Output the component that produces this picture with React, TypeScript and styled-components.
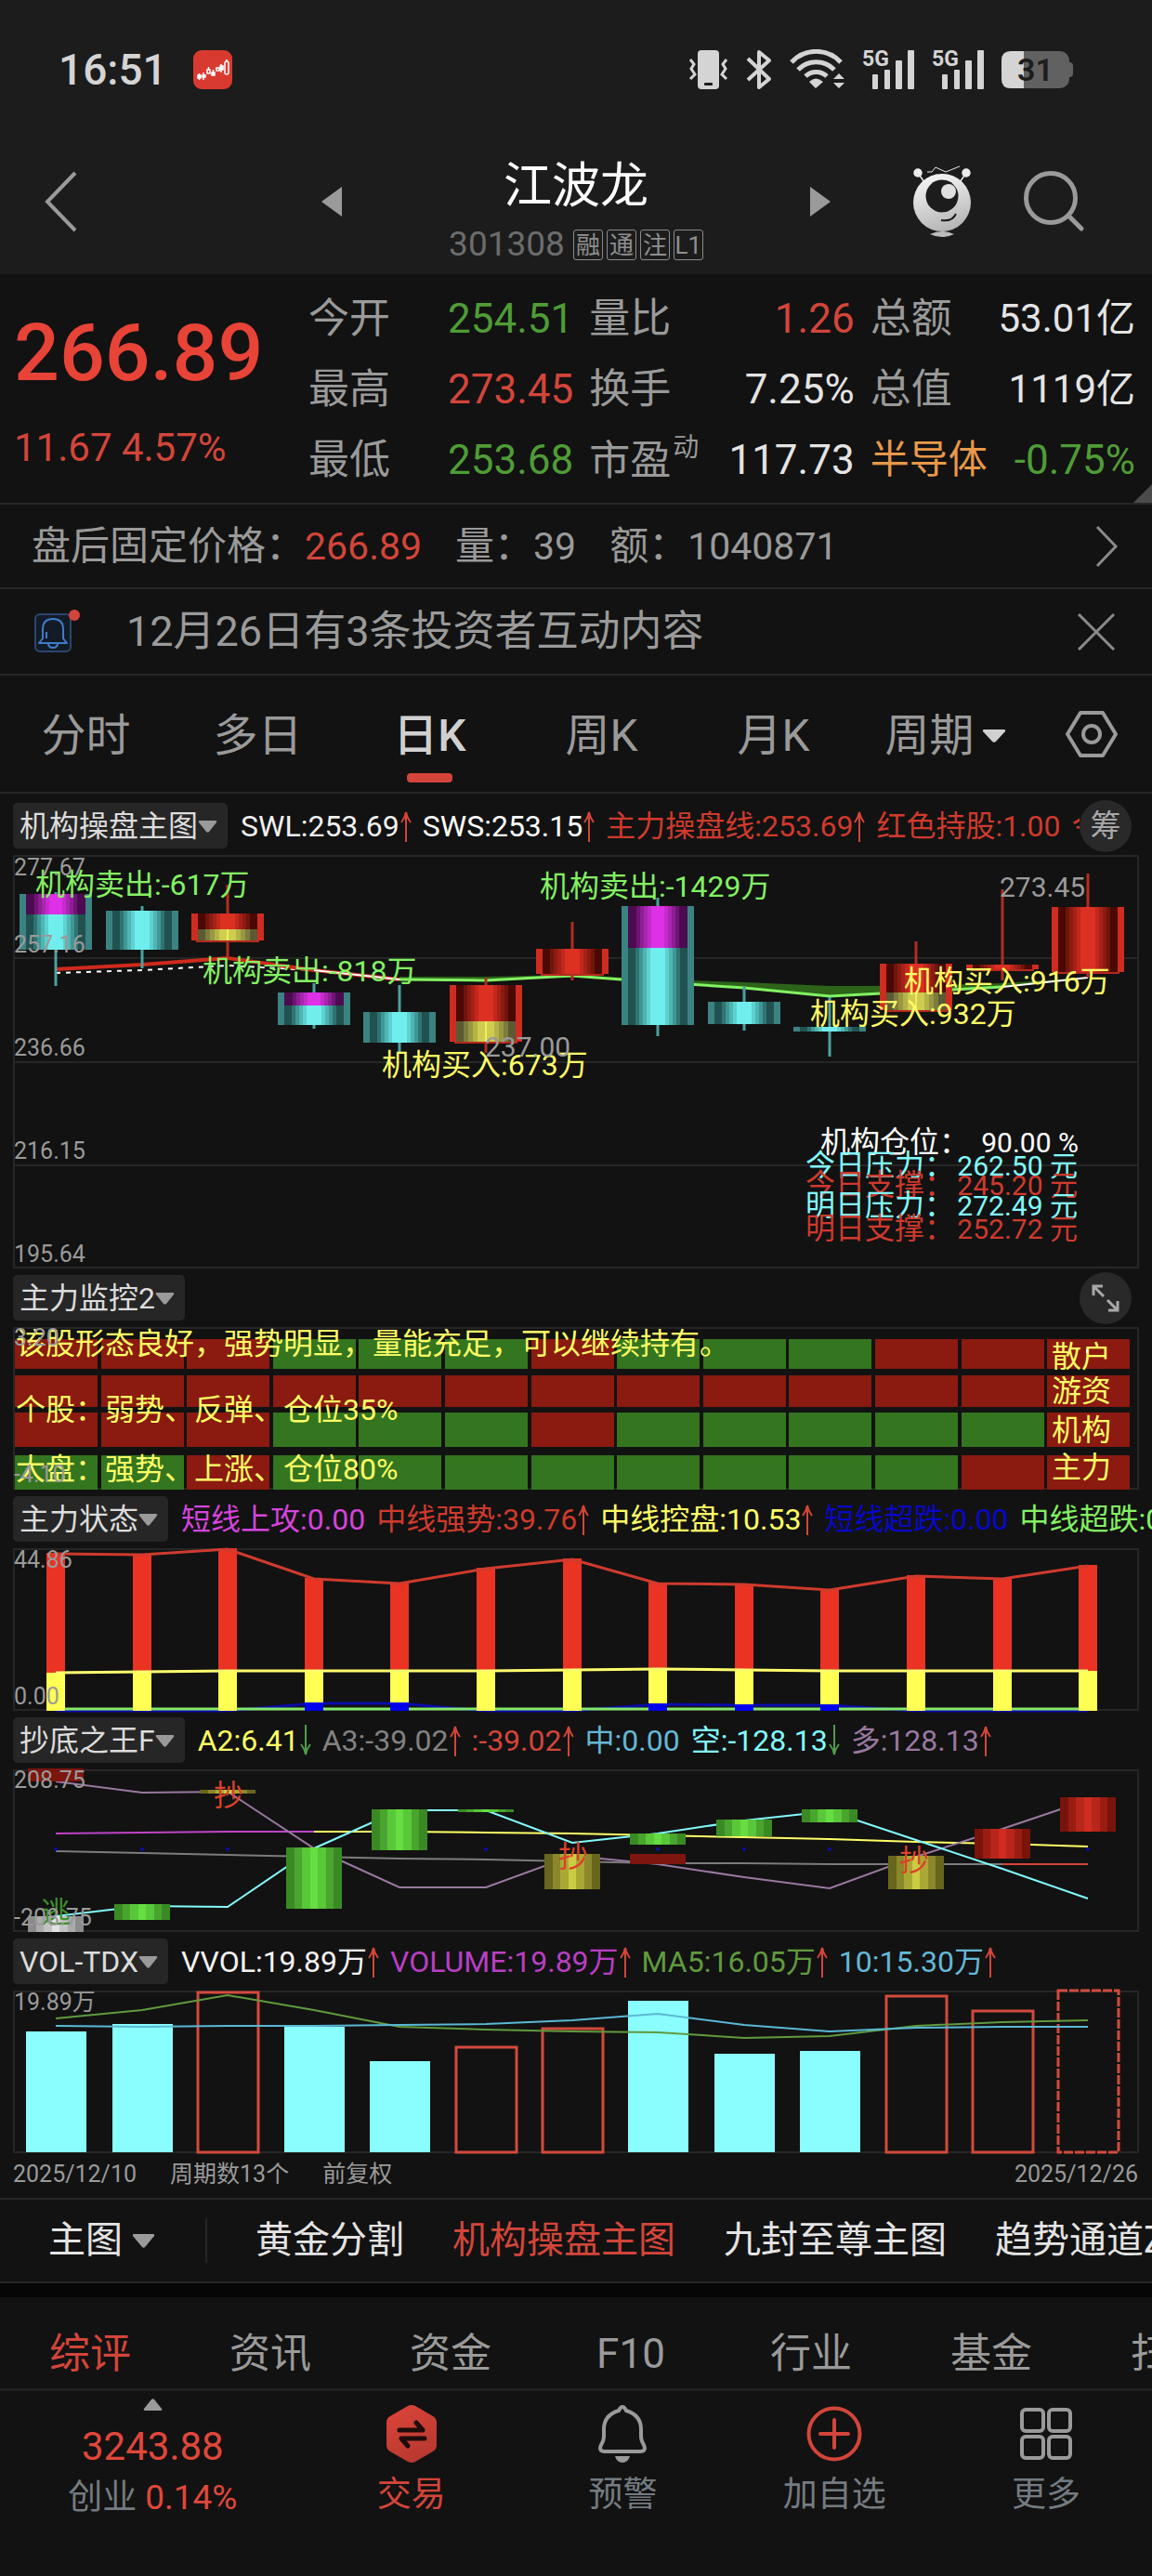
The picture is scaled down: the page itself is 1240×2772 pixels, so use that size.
import React from 'react';
import styled, { createGlobalStyle } from 'styled-components';

const C = {
  bg: '#121212',
  head: '#1c1c1c',
  line: '#262626',
  red: '#d3453a',
  green: '#4f9c36',
  gray: '#9a9a9a',
  white: '#e4e4e4',
  yellow: '#ffff66',
  cyan: '#83fbfd',
};

const Global = createGlobalStyle`
  * { box-sizing: border-box; }
  body {
    margin: 0;
    background: ${C.bg};
    color: ${C.gray};
    font-family: Roboto, "Noto Sans CJK SC", sans-serif;
  }
  button { padding: 0; border: 0; background: none; color: inherit; font: inherit; cursor: pointer; }
  a { color: inherit; text-decoration: none; }
  svg { display: block; flex: none; }
`;

const Page = styled.div`
  min-height: 100vh;
  overflow: hidden;
  background: ${C.bg};
  white-space: nowrap;
`;

/* ---------- header ---------- */

const Header = styled.header`
  background: ${C.head};
`;
const StatusBar = styled.div`
  display: flex;
  align-items: center;
  height: 149px;
  padding: 0 85px 0 63px;
  color: #d4d4d4;
`;
const Clock = styled.time`
  font-size: 46px;
  line-height: 52px;
  font-weight: 500;
  margin-right: 28px;
`;
const StatusIcons = styled.div`
  display: flex;
  align-items: center;
  gap: 19px;
  margin-left: auto;
`;
const NavBar = styled.div`
  display: grid;
  grid-template-columns: 1fr 504px 1fr;
  height: 146px;
`;
const NavLeft = styled.div`
  display: flex;
  align-items: center;
  justify-content: space-between;
  padding: 0 0 10px 48px;
`;
const NavRight = styled.div`
  display: flex;
  align-items: center;
  padding-bottom: 10px;
`;
const RobotButton = styled.button`
  margin: 0 57px 0 89px;
`;
const TitleBlock = styled.div`
  display: flex;
  flex-direction: column;
  align-items: center;
  gap: 15px;
  padding-top: 22px;
`;
const StockName = styled.h1`
  margin: 0;
  font-size: 52px;
  line-height: 60px;
  font-weight: 400;
  color: #fff;
`;
const CodeLine = styled.div`
  display: flex;
  align-items: center;
  gap: 4px;
  font-size: 37px;
  line-height: 34px;
  color: #6c6c6c;
`;
const Code = styled.span`
  margin-right: 5px;
`;
const Badge = styled.span`
  width: 32px;
  height: 33px;
  border: 1px solid #8a8a8a;
  border-radius: 3px;
  color: #8f8f8f;
  font-size: 26px;
  line-height: 32px;
  text-align: center;
`;

/* ---------- quote ---------- */

const Quote = styled.section`
  position: relative;
  display: grid;
  grid-template-columns: 300px repeat(3, 1fr);
  column-gap: 17px;
  padding: 10px 18px 8px 15px;
  border-bottom: 2px solid ${C.line};
`;
const PriceBlock = styled.div`
  display: flex;
  flex-direction: column;
  gap: 28px;
  padding-top: 25px;
  color: ${C.red};
`;
const Price = styled.strong`
  font-size: 86px;
  line-height: 100px;
  font-weight: 500;
  color: #e84337;
`;
const Change = styled.span`
  font-size: 42px;
  line-height: 48px;
`;
const Fields = styled.dl`
  margin: 0;
`;
const Field = styled.div`
  display: flex;
  align-items: center;
  justify-content: space-between;
  height: 76px;
`;
const FieldName = styled.dt<{ $color?: string }>`
  font-size: ${p => (p.$color ? 42 : 44)}px;
  line-height: 52px;
  color: ${p => p.$color || C.gray};
`;
const Dynamic = styled.sup`
  font-size: 28px;
  line-height: 28px;
  vertical-align: 20px;
  margin-left: 2px;
`;
const FieldValue = styled.dd<{ $color: string; $small?: boolean }>`
  margin: 0;
  font-size: ${p => (p.$small ? 42 : 44)}px;
  line-height: 52px;
  color: ${p => p.$color};
`;
const Corner = styled.svg`
  position: absolute;
  right: 0;
  bottom: 0;
`;

/* ---------- info rows ---------- */

const AfterHours = styled.a`
  display: flex;
  align-items: center;
  height: 91px;
  padding: 0 36px 0 34px;
  border-bottom: 2px solid ${C.line};
  font-size: 42px;
  line-height: 50px;
`;
const Amount = styled.span<{ $red?: boolean }>`
  margin-right: 36px;
  font-size: 41px;
  color: ${p => (p.$red ? C.red : C.gray)};
`;
const Push = styled.span`
  margin-left: auto;
`;
const Notice = styled.div`
  display: flex;
  align-items: center;
  height: 93px;
  padding: 0 40px 0 36px;
  border-bottom: 2px solid ${C.line};
  font-size: 45px;
  line-height: 54px;
`;
const NoticeText = styled.a`
  margin-left: 48px;
`;
const CloseButton = styled.button`
  margin-left: auto;
`;

/* ---------- period tabs ---------- */

const Periods = styled.nav`
  display: flex;
  height: 127px;
  border-bottom: 2px solid ${C.line};
`;
const Period = styled.button<{ $on?: boolean }>`
  flex: 185;
  display: flex;
  flex-direction: column;
  align-items: center;
  padding-top: 36px;
  font-size: 48px;
  line-height: 58px;
  font-weight: ${p => (p.$on ? 500 : 400)};
  color: ${p => (p.$on ? '#d0d0d0' : C.gray)};

  &::after {
    content: '';
    width: 49px;
    height: 10px;
    margin-top: 11px;
    border-radius: 4px;
    background: ${p => (p.$on ? C.red : 'transparent')};
  }
`;
const PeriodMore = styled.span`
  display: flex;
  align-items: center;
  gap: 8px;
`;
const SettingsButton = styled.button`
  flex: 130;
  display: grid;
  place-items: center;
`;

/* ---------- chart panes ---------- */

const Panes = styled.main`
  padding: 10px 0 0 14px;
`;
const Pane = styled.section`
  margin-bottom: 7px;
`;
const PaneHead = styled.div`
  display: flex;
  align-items: center;
  height: 49px;
  margin-bottom: 7px;
  font-size: 32px;
  line-height: 40px;
`;
const Picker = styled.button`
  display: flex;
  align-items: center;
  flex: none;
  height: 49px;
  padding: 1px 11px 0 7px;
  border-radius: 5px;
  background: #262626;
  color: #dcdcdc;
`;
const Readouts = styled.div`
  flex: 1;
  display: flex;
  gap: 12px;
  min-width: 0;
  margin-left: 14px;
  padding-top: 1px;
  overflow: hidden;
`;
const Readout = styled.span<{ $color: string }>`
  display: flex;
  align-items: center;
  flex: none;
  color: ${p => p.$color};
`;
const RoundButton = styled.button`
  display: grid;
  place-items: center;
  flex: none;
  width: 56px;
  height: 56px;
  margin: 0 22px 0 0;
  border-radius: 50%;
  background: #292929;
  color: #a8a8a8;
  font-size: 33px;
  line-height: 40px;
`;
const Plot = styled.svg`
  width: calc(100% - 14px);
  height: auto;
  overflow: visible;
`;
const PlotText = styled.text`
  font-family: Roboto, "Noto Sans CJK SC", sans-serif;
  white-space: pre;
`;
const DateRow = styled.footer`
  display: flex;
  gap: 36px;
  padding: 1px 15px 10px 14px;
  border-bottom: 2px solid ${C.line};
  font-size: 25px;
  line-height: 30px;
`;

/* ---------- indicator strip ---------- */

const Strip = styled.nav`
  display: flex;
  align-items: center;
  gap: 52px;
  height: 90px;
  padding-left: 52px;
  border-bottom: 2px solid ${C.line};
  font-size: 40px;
  line-height: 48px;
`;
const StripMenu = styled.button`
  display: flex;
  align-items: center;
  gap: 10px;
  flex: none;
  height: 48px;
  padding-right: 54px;
  border-right: 2px solid ${C.line};
  color: ${C.white};
`;
const StripItem = styled.button<{ $on?: boolean }>`
  flex: none;
  color: ${p => (p.$on ? C.red : C.white)};
`;
const Band = styled.div`
  height: 15px;
  background: #060606;
`;
const Sections = styled.nav`
  display: flex;
  height: 101px;
  padding-top: 24px;
  border-bottom: 3px solid #202020;
`;
const SectionTab = styled.button<{ $on?: boolean }>`
  flex: 0 0 194px;
  height: 74px;
  font-size: 44px;
  line-height: 74px;
  color: ${p => (p.$on ? C.red : C.gray)};
`;

/* ---------- bottom bar ---------- */

const BottomBar = styled.nav`
  display: grid;
  grid-template-columns: 329fr repeat(4, 228fr);
  align-items: start;
  padding-bottom: 58px;
`;
const IndexButton = styled.button`
  display: flex;
  flex-direction: column;
  align-items: center;
  padding-top: 8px;
`;
const IndexValue = styled.span`
  margin: 14px 0 8px;
  font-size: 42px;
  line-height: 50px;
  color: #e0473b;
`;
const IndexLine = styled.span`
  display: flex;
  gap: 9px;
  font-size: 37px;
  line-height: 44px;
  color: #737b80;
`;
const IndexChange = styled.span`
  color: #e0473b;
`;
const Action = styled.button<{ $on?: boolean }>`
  display: flex;
  flex-direction: column;
  align-items: center;
  gap: 14px;
  padding-top: 15px;
  font-size: 37px;
  line-height: 42px;
  color: ${p => (p.$on ? C.red : '#737b80')};
`;

/* ---------- small drawings ---------- */

const Caret = ({ w = 21, h = 13, color = '#9a9a9a', up = false }) => (
  <svg width={w} height={h} viewBox="0 0 21 13" preserveAspectRatio="none">
    <path
      d={up ? 'M2 13Q0 13 1 11L9 1Q10.500 -.5 12 1L20 11Q21 13 19 13Z' : 'M2 0Q0 0 1 2L9 12Q10.500 13.500 12 12L20 2Q21 0 19 0Z'}
      fill={color}
    />
  </svg>
);

const Arrow = ({ dir }: { dir: 'up' | 'down' }) => (
  <svg width="13" height="34" viewBox="0 0 13 34" fill="none" stroke={dir === 'up' ? C.red : '#4c9e4a'} strokeWidth="2">
    <path d={dir === 'up' ? 'M7 34V2M2 13Q6 8 7 2Q8 8 12 13' : 'M7 0V32M2 21Q6 26 7 32Q8 26 12 21'} />
  </svg>
);

const AppIcon = () => (
  <svg width="42" height="42" viewBox="0 0 42 42">
    <rect width="42" height="42" rx="9" fill="#d93a30" />
    <g stroke="#fff" fill="#fff" strokeWidth="1.500">
      <rect x="5" y="27" width="3" height="3" />
      <path d="M6.500 25V32M11 24V32M30 15V24" />
      <rect x="10" y="27" width="3" height="2" fill="none" />
      <rect x="15" y="21" width="3" height="4" fill="none" />
      <path d="M16.500 18V21" />
      <rect x="20" y="24" width="3" height="3" />
      <path d="M21.500 21V28" />
      <rect x="25" y="19" width="3" height="3" fill="none" />
      <rect x="29" y="17" width="3" height="4" />
      <rect x="34" y="12" width="4" height="14" rx="2" fill="none" />
      <path d="M36 10V12" />
    </g>
  </svg>
);

const Vibrate = () => (
  <svg width="43" height="44" viewBox="0 0 43 44">
    <rect x="10" y="1" width="23" height="42" rx="4" fill="#d4d4d4" />
    <rect x="17" y="36" width="9" height="3" rx="1" fill={C.head} />
    <path d="M2 11L6 16L3 21L7 27L2 32M41 11L37 16L40 21L36 27L41 32" fill="none" stroke="#d4d4d4" strokeWidth="3" />
  </svg>
);

const Bluetooth = () => (
  <svg width="28" height="44" viewBox="0 0 28 44">
    <path d="M2 10L25 32L14 41V3L25 12L2 33" fill="none" stroke="#d4d4d4" strokeWidth="4" strokeLinejoin="round" />
  </svg>
);

const Wifi = () => (
  <svg width="59" height="44" viewBox="0 0 59 44">
    <g fill="none" stroke="#d4d4d4" strokeWidth="5">
      <path d="M2 14A36 36 0 0 1 55 14M9 22A27 27 0 0 1 48 22M17 29A17 17 0 0 1 40 29" />
    </g>
    <path d="M21 35Q28 28 36 35L28 42ZM53 26L59 32H47ZM47 36H59L53 42Z" fill="#d4d4d4" />
  </svg>
);

const SignalSvg = styled.svg`
  overflow: visible;
`;

const Signal = () => (
  <SignalSvg width="56" height="44" viewBox="0 0 56 44" fill="#d4d4d4">
    <PlotText x="0" y="18" fontSize="23" fontWeight="700">5G</PlotText>
    <rect x="11" y="27" width="6" height="16" rx="1" />
    <rect x="24" y="22" width="6" height="21" rx="1" />
    <rect x="36" y="12" width="7" height="31" rx="1" />
    <rect x="49" y="1" width="7" height="42" rx="1" />
  </SignalSvg>
);

const Battery = () => (
  <svg width="77" height="40" viewBox="0 0 77 40">
    <rect width="73" height="40" rx="10" fill="#616161" />
    <path d="M73 12Q77 12 77 16V24Q77 28 73 28Z" fill="#616161" />
    <path d="M24 0H10Q0 0 0 10V30Q0 40 10 40H24Z" fill="#d4d4d4" />
    <PlotText x="17" y="32" fontSize="34" fontWeight="600" fill={C.head}>31</PlotText>
  </svg>
);

const Robot = () => (
  <svg width="62" height="78" viewBox="0 0 62 78">
    <defs>
      <linearGradient id="shell" x1="0.3" y1="0" x2="0.6" y2="1">
        <stop offset="0" stopColor="#f6f6f6" />
        <stop offset="1" stopColor="#b4b4b4" />
      </linearGradient>
    </defs>
    <circle cx="31" cy="40" r="31" fill="url(#shell)" />
    <circle cx="31" cy="33" r="17.500" fill={C.head} />
    <circle cx="38" cy="28" r="8" fill="#e0e0e0" />
    <path d="M30 59Q42 61 46 52" fill="none" stroke={C.head} strokeWidth="2" />
    <g fill="#ececec" stroke="#ececec" strokeWidth="1.500">
      <circle cx="5" cy="8" r="4" />
      <circle cx="57" cy="8" r="4" />
      <path d="M7 11L12 18M55 11L50 18" />
      <path d="M15 7H20L24 2L35 7L50 1" fill="none" strokeWidth="1" />
    </g>
    <path d="M18 74Q31 68 44 74Q31 80 18 74Z" fill="#bdbdbd" />
  </svg>
);

const Search = () => (
  <svg width="66" height="66" viewBox="0 0 66 66" fill="none" stroke="#9a9a9a">
    <circle cx="29" cy="29" r="26.500" strokeWidth="5" />
    <path d="M49 49L62 62" strokeWidth="5" strokeLinecap="round" />
  </svg>
);

const NoticeBell = () => (
  <svg width="52" height="48" viewBox="0 0 52 48" fill="none">
    <rect x="2" y="5" width="38" height="40" rx="5" stroke="#2b4670" strokeWidth="2" fill="#131b27" />
    <g stroke="#3f7cc8" strokeWidth="2">
      <path d="M10 31V21Q10 10 21 10Q32 10 32 21V31L36 36H6Z" strokeLinejoin="round" />
      <path d="M16 36Q16 41 21 41Q26 41 26 36M14 31V24" />
    </g>
    <circle cx="44" cy="6" r="6" fill={C.red} />
  </svg>
);

const Hexagon = () => (
  <svg width="56" height="50" viewBox="0 0 56 50" fill="none" stroke="#9a9a9a" strokeWidth="4" strokeLinejoin="round">
    <path d="M16 2H40L54 25L40 48H16L2 25Z" />
    <circle cx="28" cy="25" r="9" />
  </svg>
);

const TradeIcon = () => (
  <svg width="54" height="62" viewBox="0 0 54 62">
    <defs>
      <linearGradient id="trade" x1="0" y1="0" x2="0.5" y2="1">
        <stop offset="0" stopColor="#df453a" />
        <stop offset="1" stopColor="#b83930" />
      </linearGradient>
    </defs>
    <path d="M23 1Q27 -1 31 1L50 12Q54 14 54 19V43Q54 48 50 50L31 61Q27 63 23 61L4 50Q0 48 0 43V19Q0 14 4 12Z" fill="url(#trade)" />
    <path d="M14 27H39L32 19M41 36H16L23 44" fill="none" stroke="#1d0c0b" strokeWidth="5" strokeLinecap="round" strokeLinejoin="round" />
  </svg>
);

const AlertIcon = () => (
  <svg width="52" height="62" viewBox="0 0 52 62">
    <path
      d="M26 2Q28 2 30 6Q46 11 46 26V34Q46 38 49 43Q52 50 45 50H7Q0 50 3 43Q6 38 6 34V26Q6 11 22 6Q24 2 26 2Z"
      fill="none"
      stroke="#9a9a9a"
      strokeWidth="4"
    />
    <path d="M18 55H34Q32 62 26 62Q20 62 18 55Z" fill="#9a9a9a" />
  </svg>
);

const AddIcon = () => (
  <svg width="60" height="62" viewBox="0 0 60 62" fill="none" stroke={C.red} strokeWidth="4">
    <circle cx="30" cy="31" r="27.500" />
    <path d="M15 31H45M30 16V46" strokeLinecap="round" />
  </svg>
);

const MoreIcon = () => (
  <svg width="56" height="62" viewBox="0 0 56 62" fill="none" stroke="#9a9a9a" strokeWidth="4">
    {[2, 31].map(x => [5, 34].map(y => <rect key={`${x}-${y}`} x={x} y={y} width="23" height="23" rx="4" />))}
  </svg>
);

/* ---------- chart helpers ---------- */

const SLOT = 92.6;
const cx = (i: number) => Math.round(46 + i * SLOT);
const polyline = (ys: number[], from = 0) => ys.map((y, k) => `${cx(from + k)},${y}`).join(' ');

type Tone = [number, string][];

const TONES: Record<string, Tone> = {
  cyan: [[32, '#215250'], [24, '#2f7472'], [20, '#3f9795'], [16, '#4fb5b3'], [12, '#5dd2d0'], [8, '#70eeee']],
  purple: [[32, '#4c0b50'], [23, '#6f1575'], [19, '#8f1d96'], [15, '#a926b0'], [11, '#c42bcb'], [7, '#de30e6']],
  red: [[32, '#4a0903'], [24, '#70140c'], [20, '#8c1b12'], [16, '#a62118'], [12, '#c2281c'], [8, '#dc3022']],
  yellow: [[32, '#5b5a33'], [24, '#7d7c3c'], [19, '#999841'], [14, '#b4b348'], [9, '#cfcc50'], [1, '#f2ef58']],
};

const Stripes = ({ x, top, bottom, tone }: { x: number; top: number; bottom: number; tone: Tone }) => (
  <g>
    {tone.map(([half, fill]) => (
      <rect key={half} x={x - half} y={top} width={half * 2} height={bottom - top} fill={fill} />
    ))}
  </g>
);

const Frame = ({ h, grid = [] }: { h: number; grid?: number[] }) => (
  <g stroke={C.line} strokeWidth="2" fill="none">
    <rect x="1" y="1" width="1210" height={h - 2} />
    {grid.map(y => <path key={y} d={`M1 ${y}H1211`} />)}
  </g>
);

const Label = ({ x, y, children, size = 32, color = C.gray, end = false }: {
  x: number; y: number; children: string; size?: number; color?: string; end?: boolean;
}) => (
  <PlotText x={x} y={y} fontSize={size} fill={color} textAnchor={end ? 'end' : 'start'}>{children}</PlotText>
);

/* ---------- main chart ---------- */

type Candle = { kind: 'cyan' | 'red'; high: number; top: number; bottom: number; low: number; split?: number };

const candles: Candle[] = [
  { kind: 'cyan', high: 40, top: 42, bottom: 102, low: 141, split: 64 },
  { kind: 'cyan', high: 55, top: 60, bottom: 102, low: 122 },
  { kind: 'red', high: 32, top: 63, bottom: 92, low: 112, split: 80 },
  { kind: 'cyan', high: 138, top: 148, bottom: 183, low: 187, split: 162 },
  { kind: 'cyan', high: 140, top: 169, bottom: 202, low: 212 },
  { kind: 'red', high: 132, top: 140, bottom: 201, low: 213, split: 179 },
  { kind: 'red', high: 72, top: 101, bottom: 128, low: 135 },
  { kind: 'cyan', high: 46, top: 55, bottom: 183, low: 195, split: 100 },
  { kind: 'cyan', high: 142, top: 158, bottom: 182, low: 189 },
  { kind: 'cyan', high: 153, top: 185, bottom: 190, low: 217 },
  { kind: 'red', high: 93, top: 117, bottom: 167, low: 167, split: 148 },
  { kind: 'red', high: 37, top: 118, bottom: 123, low: 135 },
  { kind: 'red', high: 20, top: 56, bottom: 126, low: 132 },
];

const MainChart = () => (
  <Plot viewBox="0 0 1212 445" role="img" aria-label="机构操盘主图">
    <Frame h={445} grid={[111, 223, 334]} />
    <polyline points={`${polyline([131, 131, 129, 134, 137, 141, 141, 138, 132], 4)} ${cx(12)},132 ${cx(11)},142 ${cx(10)},147 ${cx(9)},152 ${cx(8)},143 ${cx(7)},137 ${cx(6)},130 ${cx(5)},135 ${cx(4)},134`} fill="#2c6419" />
    <polyline points={polyline([127, 124, 119, 124])} fill="none" stroke="#fff" strokeWidth="2" strokeDasharray="5 6" />
    <polyline points={polyline([123, 118, 111, 124, 134])} fill="none" stroke="#cf2a1d" strokeWidth="4" />
    <polyline points={polyline([124, 134], 3)} fill="none" stroke="#fff" strokeWidth="2" />
    <polyline points={polyline([134, 135, 130, 137, 143, 152, 147, 142], 4)} fill="none" stroke="#83f163" strokeWidth="3" />
    <polyline points={polyline([142, 132], 11)} fill="none" stroke="#fff" strokeWidth="2" />
    {candles.map((c, i) => {
      const x = cx(i);
      const cyan = c.kind === 'cyan';
      return (
        <g key={i}>
          <rect x={x - 39} y={c.top} width="78" height={c.bottom - c.top} fill={cyan ? '#3b8382' : '#cf2c20'} />
          <Stripes x={x} top={c.top} bottom={c.bottom} tone={TONES[c.kind]} />
          {c.split && cyan && <Stripes x={x} top={c.top} bottom={c.split} tone={TONES.purple} />}
          {c.split && !cyan && <Stripes x={x} top={c.split} bottom={c.bottom} tone={TONES.yellow} />}
          {!cyan && <path d={`M${x - 34} ${c.bottom + 1}H${x + 34}`} stroke="#b5281d" strokeWidth="2" />}
          <path d={`M${x} ${c.high}V${c.top}M${x} ${c.bottom}V${c.low}`} stroke={cyan ? '#4ba19f' : '#b02d22'} strokeWidth="3" />
        </g>
      );
    })}
    <Label x={24} y={43} color="#83f163">机构卖出:-617万</Label>
    <Label x={567} y={45} color="#83f163">机构卖出:-1429万</Label>
    <Label x={204} y={136} color="#83f163">机构卖出:-818万</Label>
    <Label x={397} y={237} color={C.yellow}>机构买入:673万</Label>
    <Label x={959} y={147} color={C.yellow}>机构买入:916万</Label>
    <Label x={858} y={182} color={C.yellow}>机构买入:932万</Label>
    {[['277.67', 22], ['257.16', 105], ['236.66', 216], ['216.15', 327], ['195.64', 438]].map(([t, y]) => (
      <Label key={t} x={1} y={y as number} size={25}>{t as string}</Label>
    ))}
    <Label x={1062} y={45} size={30}>273.45</Label>
    <Label x={508} y={217} size={30}>237.00</Label>
    <Label x={869} y={320} color="#fff">机构仓位：</Label>
    <Label x={1147} y={320} size={30} color="#fff" end>90.00 %</Label>
    {[
      ['今日压力：', '262.50 元', 345, C.cyan],
      ['今日支撑：', '245.20 元', 366, '#cf3a2d'],
      ['明日压力：', '272.49 元', 388, C.cyan],
      ['明日支撑：', '252.72 元', 413, '#cf3a2d'],
    ].map(([name, value, y, color]) => (
      <g key={name as string}>
        <Label x={853} y={y as number} color={color as string}>{name as string}</Label>
        <Label x={1146} y={y as number} size={30} color={color as string} end>{value as string}</Label>
      </g>
    ))}
  </Plot>
);

/* ---------- monitor grid ---------- */

const heat: [number, number, string][] = [
  [13, 32, 'RRRGGGRGGGRRR'],
  [52, 34, 'RRRRRRRRRRRRR'],
  [92, 37, 'RRRGGGRGGGGGR'],
  [138, 37, 'GGRGGGGGGGGRR'],
];

const MonitorChart = () => (
  <Plot viewBox="0 0 1212 175" role="img" aria-label="主力监控2">
    <Frame h={175} />
    {heat.map(([y, h, cells]) =>
      cells.split('').map((c, i) => (
        <rect key={`${y}-${i}`} x={cx(i) - 44} y={y} width="89" height={h} fill={c === 'R' ? '#8b1a10' : '#34751f'} />
      )),
    )}
    <Label x={3} y={29} color={C.yellow}>该股形态良好，强势明显，量能充足，可以继续持有。</Label>
    <Label x={3} y={100} color={C.yellow}>个股：弱势、反弹、仓位35%</Label>
    <Label x={3} y={164} color={C.yellow}>大盘：强势、上涨、仓位80%</Label>
    <Label x={1} y={20} size={25}>3.20</Label>
    <Label x={1} y={167} size={25}>-4.10</Label>
    <Label x={1118} y={43} color={C.yellow}>散户</Label>
    <Label x={1118} y={80} color={C.yellow}>游资</Label>
    <Label x={1118} y={122} color={C.yellow}>机构</Label>
    <Label x={1118} y={162} color={C.yellow}>主力</Label>
    <rect x="1155" y="24" width="2" height="4" fill="#fff" />
  </Plot>
);

/* ---------- state bars ---------- */

const redTops = [5, 6, 0, 32, 37, 21, 11, 37, 38, 44, 29, 32, 18];
const yellowTops = [134, 133, 132, 132, 132, 132, 131, 130, 131, 132, 132, 132, 132];
const blueTops: Record<number, number> = { 3: 166, 4: 166, 7: 167, 8: 168, 9: 168 };

const StateChart = () => (
  <Plot viewBox="0 0 1212 175" role="img" aria-label="主力状态">
    <Frame h={175} />
    <polyline points={polyline([175, 175, 175, 167, 167, 175, 175, 168, 169, 169, 175, 175, 175])} fill="none" stroke="#0b0ba8" strokeWidth="3" />
    <path d={`M${cx(0)} 173H${cx(12)}`} stroke="#83e96a" strokeWidth="3" />
    {redTops.map((t, i) => (
      <g key={i}>
        <rect x={cx(i) - 10} y={t} width="20" height={175 - t} fill="#ea3323" />
        <rect x={cx(i) - 10} y={yellowTops[i]} width="20" height={175 - yellowTops[i]} fill="#ffff54" />
        {blueTops[i] && <rect x={cx(i) - 10} y={blueTops[i]} width="20" height={175 - blueTops[i]} fill="#0000f0" />}
      </g>
    ))}
    <polyline points={polyline(redTops.map(t => t + 1))} fill="none" stroke="#cf3b2e" strokeWidth="3" />
    <polyline points={polyline(yellowTops)} fill="none" stroke="#ffff6e" strokeWidth="3" />
    <Label x={1} y={21} size={25}>44.86</Label>
    <Label x={1} y={168} size={25}>0.00</Label>
  </Plot>
);

/* ---------- bottom-fishing chart ---------- */

const BOX: Record<string, Tone> = {
  green: [[30, '#3a8a24'], [21, '#49a52e'], [13, '#58c838'], [4, '#66de42']],
  yellow: [[30, '#68661c'], [21, '#8a882a'], [13, '#aaa834'], [4, '#cccc44']],
  red: [[30, '#78140c'], [21, '#9a1d13'], [13, '#b8251a'], [4, '#d02c1f']],
  dark: [[30, '#7d160e']],
  gray: [[30, '#8c8c8c'], [21, '#ababab'], [13, '#c4c4c4'], [4, '#e2e2e2']],
};

const boxes: [number, string, number, number][] = [
  [0, 'dark', -1, 13], [0, 'gray', 158, 175], [1, 'green', 145, 162], [2, 'yellow', 22, 26],
  [3, 'green', 84, 150], [4, 'green', 43, 87], [5, 'green', 43, 46], [6, 'yellow', 91, 129],
  [7, 'green', 69, 81], [7, 'dark', 91, 102], [8, 'green', 54, 72], [9, 'green', 43, 57],
  [10, 'yellow', 93, 129], [11, 'red', 64, 96], [12, 'red', 30, 67],
];

const DipChart = () => (
  <Plot viewBox="0 0 1212 175" role="img" aria-label="抄底之王F">
    <Frame h={175} />
    <g fill="none" strokeWidth="2">
      <polyline points={polyline([88, 90, 92, 94, 96, 97, 99, 101, 101, 102, 102, 102])} stroke="#7c7c7c" />
      <polyline points={polyline([102, 102], 11)} stroke={C.red} />
      <polyline points={polyline([69, 68, 67, 67])} stroke="#c044c8" />
      <polyline points={polyline([67, 67, 68, 69, 71, 73, 75, 78, 80, 83], 3)} stroke={C.yellow} />
      <polyline points={polyline([13, 25, 24, 85, 127, 127, 93, 102, 116, 128, 94, 64, 33])} stroke="#99789f" />
      <polyline points={polyline([158, 147, 148, 85, 44, 44, 79, 69, 55, 45, 76, 107, 139])} stroke={C.cyan} />
    </g>
    {[0, 1, 2, 5, 7, 8, 9, 12].map(i => <circle key={i} cx={cx(i)} cy="86" r="2" fill="#0d0da8" />)}
    {boxes.map(([i, tone, top, bottom]) => (
      <Stripes key={`${i}${tone}`} x={cx(i)} top={top} bottom={bottom} tone={BOX[tone]} />
    ))}
    <Label x={216} y={39} color="#db4129">抄</Label>
    <Label x={587} y={105} color="#db4129">抄</Label>
    <Label x={954} y={109} color="#db4129">抄</Label>
    <Label x={30} y={165} color="#3f8f2d">逃</Label>
    <Label x={1} y={20} size={25}>208.75</Label>
    <Label x={1} y={168} size={25}>-208.75</Label>
  </Plot>
);

/* ---------- volume ---------- */

const volumes: [number, boolean][] = [
  [44, false], [36, false], [2, true], [39, false], [76, false], [61, true], [41, true],
  [11, false], [68, false], [65, false], [6, true], [22, true], [0, true],
];

const VolumeChart = () => (
  <Plot viewBox="0 0 1212 175" role="img" aria-label="VOL-TDX">
    <Frame h={175} />
    {volumes.map(([top, rise], i) =>
      rise ? (
        <rect
          key={i}
          x={cx(i) - 32}
          y={top}
          width="65"
          height={174 - top}
          fill="none"
          stroke="#d24a3c"
          strokeWidth="3"
          strokeDasharray={i === 12 ? '10 2' : undefined}
        />
      ) : (
        <rect key={i} x={cx(i) - 32} y={top} width="65" height={174 - top} fill="#8afeff" />
      ),
    )}
    <polyline points={polyline([30, 21, 5, 21, 39, 42, 44, 45, 51, 49, 38, 34, 32])} fill="none" stroke="#609a3e" strokeWidth="2" />
    <polyline points={polyline([38, 39, 38, 38, 37, 36, 32, 25, 37, 44, 40, 39, 39])} fill="none" stroke="#5ab8d4" strokeWidth="2" />
    <Label x={1} y={21} size={25}>19.89万</Label>
  </Plot>
);

/* ---------- pane ---------- */

type Reading = [string, string, ('up' | 'down')?];

const ChartPane = ({ name, readings, action, children }: {
  name: string; readings: Reading[]; action?: React.ReactNode; children: React.ReactNode;
}) => (
  <Pane>
    <PaneHead>
      <Picker type="button">{name}<Caret /></Picker>
      <Readouts>
        {readings.map(([text, color, dir]) => (
          <Readout key={text} $color={color}>{text}{dir && <Arrow dir={dir} />}</Readout>
        ))}
      </Readouts>
      {action}
    </PaneHead>
    {children}
  </Pane>
);

const quoteColumns: { name: string; value: string; color: string; accent?: string; sup?: string; small?: boolean }[][] = [
  [
    { name: '今开', value: '254.51', color: C.green },
    { name: '最高', value: '273.45', color: C.red },
    { name: '最低', value: '253.68', color: C.green },
  ],
  [
    { name: '量比', value: '1.26', color: C.red },
    { name: '换手', value: '7.25%', color: C.white },
    { name: '市盈', sup: '动', value: '117.73', color: C.white },
  ],
  [
    { name: '总额', value: '53.01亿', color: C.white, small: true },
    { name: '总值', value: '1119亿', color: C.white, small: true },
    { name: '半导体', value: '-0.75%', color: C.green, accent: '#e8984a' },
  ],
];

export default function App() {
  return (
    <Page>
      <Global />
      <Header>
        <StatusBar>
          <Clock>16:51</Clock>
          <AppIcon />
          <StatusIcons>
            <Vibrate />
            <Bluetooth />
            <Wifi />
            <Signal />
            <Signal />
            <Battery />
          </StatusIcons>
        </StatusBar>
        <NavBar>
          <NavLeft>
            <button type="button" aria-label="返回">
              <svg width="36" height="66" viewBox="0 0 36 66" fill="none" stroke="#9a9a9a" strokeWidth="4">
                <path d="M33 2L3 33L33 64" />
              </svg>
            </button>
            <button type="button" aria-label="上一只">
              <svg width="22" height="32" viewBox="0 0 22 32"><path d="M22 0V32L0 16Z" fill="#9a9a9a" /></svg>
            </button>
          </NavLeft>
          <TitleBlock>
            <StockName>江波龙</StockName>
            <CodeLine>
              <Code>301308</Code>
              <Badge>融</Badge>
              <Badge>通</Badge>
              <Badge>注</Badge>
              <Badge>L1</Badge>
            </CodeLine>
          </TitleBlock>
          <NavRight>
            <button type="button" aria-label="下一只">
              <svg width="22" height="32" viewBox="0 0 22 32"><path d="M0 0V32L22 16Z" fill="#9a9a9a" /></svg>
            </button>
            <RobotButton type="button" aria-label="助手"><Robot /></RobotButton>
            <button type="button" aria-label="搜索"><Search /></button>
          </NavRight>
        </NavBar>
      </Header>

      <Quote>
        <PriceBlock>
          <Price>266.89</Price>
          <Change>11.67 4.57%</Change>
        </PriceBlock>
        {quoteColumns.map((fields, k) => (
          <Fields key={k}>
            {fields.map(f => (
              <Field key={f.name}>
                <FieldName $color={f.accent}>{f.name}{f.sup && <Dynamic>{f.sup}</Dynamic>}</FieldName>
                <FieldValue $color={f.color} $small={f.small}>{f.value}</FieldValue>
              </Field>
            ))}
          </Fields>
        ))}
        <Corner width="20" height="20" viewBox="0 0 20 20"><path d="M20 0V20H0Z" fill="#4b4b4b" /></Corner>
      </Quote>

      <AfterHours href="#after-hours">
        盘后固定价格：<Amount $red>266.89</Amount>
        量：<Amount>39</Amount>
        额：<Amount>1040871</Amount>
        <Push>
          <svg width="25" height="46" viewBox="0 0 25 46" fill="none" stroke="#8a8a8a" strokeWidth="3"><path d="M2 2L22 23L2 44" /></svg>
        </Push>
      </AfterHours>

      <Notice>
        <NoticeBell />
        <NoticeText href="#notice">12月26日有3条投资者互动内容</NoticeText>
        <CloseButton type="button" aria-label="关闭">
          <svg width="40" height="40" viewBox="0 0 40 40" stroke="#8a8a8a" strokeWidth="3"><path d="M1 1L39 39M39 1L1 39" /></svg>
        </CloseButton>
      </Notice>

      <Periods>
        <Period type="button">分时</Period>
        <Period type="button">多日</Period>
        <Period type="button" $on>日K</Period>
        <Period type="button">周K</Period>
        <Period type="button">月K</Period>
        <Period type="button"><PeriodMore>周期<Caret w={26} h={14} color="#d0d0d0" /></PeriodMore></Period>
        <SettingsButton type="button" aria-label="设置"><Hexagon /></SettingsButton>
      </Periods>

      <Panes>
        <ChartPane
          name="机构操盘主图"
          readings={[
            ['SWL:253.69', '#f0f0f0', 'up'],
            ['SWS:253.15', '#ffffff', 'up'],
            ['主力操盘线:253.69', '#cf3a2d', 'up'],
            ['红色持股:1.00', '#cf3a2d'],
            ['今', '#cf3a2d'],
          ]}
          action={<RoundButton type="button">筹</RoundButton>}
        >
          <MainChart />
        </ChartPane>
        <ChartPane
          name="主力监控2"
          readings={[]}
          action={
            <RoundButton type="button" aria-label="展开">
              <svg width="30" height="30" viewBox="0 0 30 30" fill="none" stroke="#a8a8a8" strokeWidth="3">
                <path d="M2 12V2H12M2 2L13 13M28 18V28H18M28 28L17 17" />
              </svg>
            </RoundButton>
          }
        >
          <MonitorChart />
        </ChartPane>
        <ChartPane
          name="主力状态"
          readings={[
            ['短线上攻:0.00', '#d444dc'],
            ['中线强势:39.76', '#cf3a2d', 'up'],
            ['中线控盘:10.53', C.yellow, 'up'],
            ['短线超跌:0.00', '#0808c8'],
            ['中线超跌:0.00', '#83f163'],
          ]}
        >
          <StateChart />
        </ChartPane>
        <ChartPane
          name="抄底之王F"
          readings={[
            ['A2:6.41', C.yellow, 'down'],
            ['A3:-39.02', '#828282', 'up'],
            [':-39.02', C.red, 'up'],
            ['中:0.00', '#64b8d6'],
            ['空:-128.13', C.cyan, 'down'],
            ['多:128.13', '#9a78a0', 'up'],
          ]}
        >
          <DipChart />
        </ChartPane>
        <ChartPane
          name="VOL-TDX"
          readings={[
            ['VVOL:19.89万', '#f4f4f4', 'up'],
            ['VOLUME:19.89万', '#b83fc4', 'up'],
            ['MA5:16.05万', '#609a3e', 'up'],
            ['10:15.30万', '#64b8d6', 'up'],
          ]}
        >
          <VolumeChart />
        </ChartPane>
      </Panes>
      <DateRow>
        <time>2025/12/10</time>
        <span>周期数13个</span>
        <span>前复权</span>
        <Push>2025/12/26</Push>
      </DateRow>

      <Strip>
        <StripMenu type="button">主图<Caret w={25} h={15} /></StripMenu>
        <StripItem type="button">黄金分割</StripItem>
        <StripItem type="button" $on>机构操盘主图</StripItem>
        <StripItem type="button">九封至尊主图</StripItem>
        <StripItem type="button">趋势通道Z</StripItem>
      </Strip>
      <Band />
      <Sections>
        <SectionTab type="button" $on>综评</SectionTab>
        <SectionTab type="button">资讯</SectionTab>
        <SectionTab type="button">资金</SectionTab>
        <SectionTab type="button">F10</SectionTab>
        <SectionTab type="button">行业</SectionTab>
        <SectionTab type="button">基金</SectionTab>
        <SectionTab type="button">扫雷</SectionTab>
      </Sections>

      <BottomBar>
        <IndexButton type="button">
          <Caret up />
          <IndexValue>3243.88</IndexValue>
          <IndexLine>创业<IndexChange>0.14%</IndexChange></IndexLine>
        </IndexButton>
        <Action type="button" $on><TradeIcon />交易</Action>
        <Action type="button"><AlertIcon />预警</Action>
        <Action type="button"><AddIcon />加自选</Action>
        <Action type="button"><MoreIcon />更多</Action>
      </BottomBar>
    </Page>
  );
}
